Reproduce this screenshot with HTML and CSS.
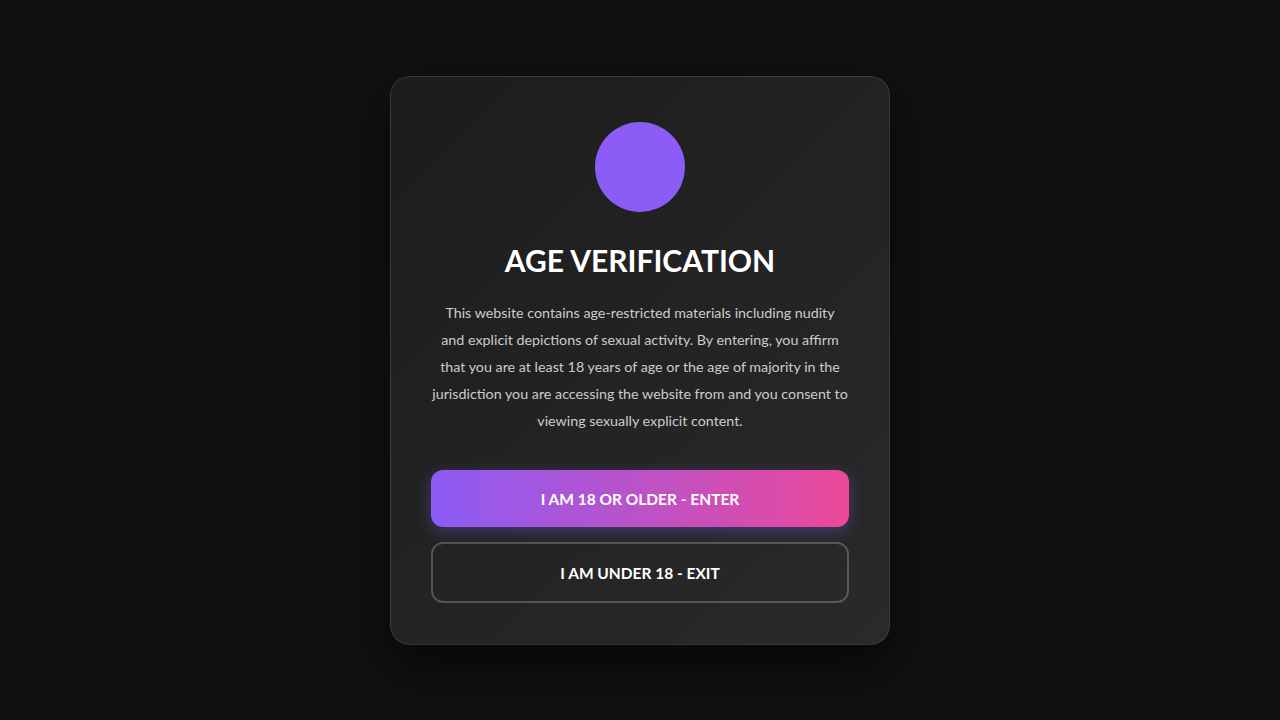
FILE: index.html
```html
<!DOCTYPE html>
<html lang="en">
<head>
<meta charset="utf-8">
<title>Age Verification</title>
<link rel="stylesheet" href="styles.css">
</head>
<body>
<main class="overlay">
  <section class="card">
    <div class="logo"></div>
    <h1 class="title">AGE VERIFICATION</h1>
    <p class="text">This website contains age-restricted materials including nudity<br>and explicit depictions of sexual activity. By entering, you affirm that you are at least 18 years of age or the age of majority in the jurisdiction you are accessing the website from and you consent to viewing sexually explicit content.</p>
    <div class="actions">
      <button class="btn btn-enter">I AM 18 OR OLDER - ENTER</button>
      <button class="btn btn-exit">I AM UNDER 18 - EXIT</button>
    </div>
  </section>
</main>
</body>
</html>
```
FILE: styles.css
```css
* { box-sizing: border-box; }
html, body {
  margin: 0;
  height: 100%;
  background: #111111;
  font-family: Lato, "Noto Sans", sans-serif;
}
.overlay {
  height: 720px;
  display: flex;
  align-items: flex-start;
  justify-content: center;
  padding-top: 76px;
}
.card {
  width: 500px;
  padding: 45px 40px 41px;
  border: 1px solid rgba(255,255,255,0.1);
  border-radius: 20px;
  background: linear-gradient(135deg, #1c1c1c 0%, #2a2a2a 100%);
  box-shadow: 0 20px 50px rgba(0,0,0,0.6);
  display: flex;
  flex-direction: column;
  align-items: center;
  text-align: center;
}
.logo {
  width: 90px;
  height: 90px;
  border-radius: 50%;
  background: #8b5cf6;
}
.title {
  margin: 29px 0 0;
  font-size: 30px;
  line-height: 38px;
  font-weight: 700;
  color: #ffffff;
}
.text {
  margin: 20px 0 0;
  font-size: 14.3px;
  line-height: 27px;
  color: #cccccc;
}
.actions {
  margin-top: 36px;
  width: 100%;
  display: flex;
  flex-direction: column;
  gap: 15px;
}
.btn {
  width: 100%;
  font-family: inherit;
  font-size: 15.5px;
  font-weight: 700;
  line-height: 20px;
  color: #ffffff;
  border-radius: 12px;
  cursor: pointer;
}
.btn-enter {
  padding: 18.5px 20px;
  border: none;
  background: linear-gradient(90deg, #8b5cf6 0%, #ec4899 100%);
  box-shadow: 0 4px 15px rgba(139,92,246,0.35);
}
.btn-exit {
  padding: 18.5px 20px;
  border: 2px solid rgba(255,255,255,0.22);
  background: transparent;
}
```
